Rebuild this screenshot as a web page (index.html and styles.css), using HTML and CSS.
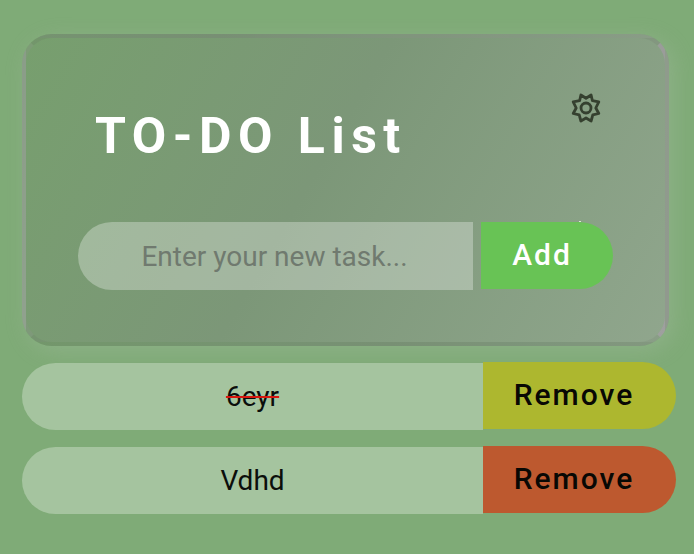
FILE: index.html
```html
<!DOCTYPE html>
<html lang="en">
<head>
<meta charset="utf-8">
<title>TO-DO List</title>
<link rel="stylesheet" href="styles.css">
</head>
<body>
<main class="app">
  <section class="card">
    <header class="card-head">
      <h1>TO-DO List</h1>
      <svg class="gear" viewBox="0 0 30 30" aria-hidden="true">
        <path d="M9.9 2 L15 5.3 L20.1 2 L21.4 7.7 L27.8 8.8 L24.8 15 L27.8 20.5 L21.8 21.9 L20.1 28 L15 25 L9.9 28 L8.2 21.9 L2.2 20.5 L5.2 15 L2.2 8.8 L8.6 7.7 Z"/>
        <circle cx="15" cy="15" r="5"/>
      </svg>
    </header>
    <form class="entry">
      <input class="field" type="text" placeholder="Enter your new task...">
      <button class="add" type="button">Add</button>
    </form>
  </section>
  <ul class="tasks">
    <li class="task done"><span class="label"><span class="text">6eyr</span></span><button class="remove" type="button">Remove</button></li>
    <li class="task"><span class="label"><span class="text">Vdhd</span></span><button class="remove" type="button">Remove</button></li>
  </ul>
</main>
</body>
</html>
```
FILE: styles.css
```css
* { box-sizing: border-box; }
body {
  margin: 0;
  min-height: 554px;
  background: #7fab77;
  font-family: Roboto, sans-serif;
  overflow: hidden;
}
.app { padding: 34px 18px 0 22px; }
.card {
  width: 647px;
  height: 312px;
  padding: 0 52px;
  border: 4px solid;
  border-color: rgba(100, 80, 100, 0.1) rgba(185, 150, 190, 0.38) rgba(100, 92, 100, 0.1) rgba(150, 145, 150, 0.2);
  border-radius: 30px;
  background-image: linear-gradient(120deg, #779f6e, #7c9778 45%, #90a68d);
  box-shadow: 5px 5px 22px rgba(190, 195, 190, 0.24);
}
.card-head {
  display: flex;
  justify-content: space-between;
  height: 184px;
  padding: 56px 12px 0 17px;
}
h1 {
  margin: 12px 0 0;
  font-size: 50px;
  line-height: 60px;
  font-weight: 700;
  letter-spacing: 6.5px;
  color: #fff;
}
.gear {
  width: 30px;
  height: 30px;
  margin-top: -1px;
  fill: none;
  stroke: #35402f;
  stroke-width: 2.8;
  stroke-linejoin: round;
}
.entry { position: relative; display: flex; gap: 8px; margin: 0; }
.entry::after {
  content: "";
  position: absolute;
  top: -1px;
  right: 32px;
  width: 2px;
  height: 1px;
  background: #dce8d8;
}
.field {
  width: 395px;
  height: 68px;
  padding: 1px 2px 0 0;
  border: 0;
  border-radius: 34px 0 0 34px;
  background: rgba(255, 255, 255, 0.3);
  font: 400 28px Roboto, sans-serif;
  text-align: center;
}
.field::placeholder { color: #707a6f; opacity: 1; }
button {
  height: 67px;
  padding: 0;
  border: 0;
  border-radius: 0 34px 34px 0;
  font: 500 30px Roboto, sans-serif;
  letter-spacing: 2px;
}
.add { width: 132px; padding-right: 10px; padding-bottom: 3px; background: #68c355; color: #fff; }
.tasks { margin: 16px 0 0; padding: 0; list-style: none; }
.task { display: flex; height: 67px; margin-bottom: 17px; }
.label {
  width: 461px;
  margin-top: 1px;
  height: 67px;
  border-radius: 34px 0 0 34px;
  background: #a5c49f;
  color: #0b0e0b;
  font-size: 28px;
  line-height: 68px;
  text-align: center;
}
.remove { width: 193px; padding-right: 11px; padding-bottom: 3px; background: #bd592f; color: #080804; }
.done .remove { background: #adb72f; }
.done .text { text-decoration: line-through #d8160f 2px; }
```
